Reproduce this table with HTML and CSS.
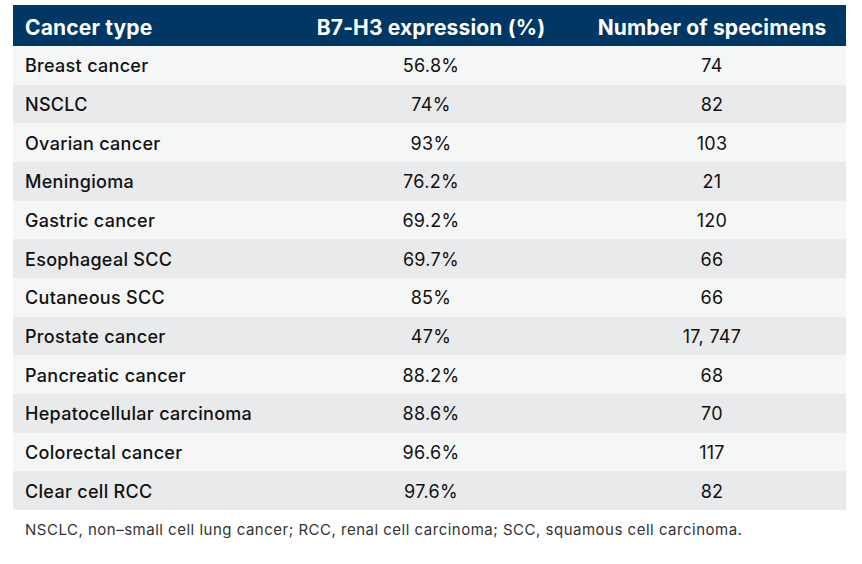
FILE: index.html
```html
<!DOCTYPE html>
<html>
<head>
<meta charset="utf-8">
<link rel="stylesheet" href="styles.css">
</head>
<body>
<div class="wrap">
<table class="data">
<colgroup><col class="c1"><col class="c2"><col class="c3"></colgroup>
<thead>
<tr><th class="lbl">Cancer type</th><th>B7-H3 expression (%)</th><th>Number of specimens</th></tr>
</thead>
<tbody>
<tr><td class="lbl">Breast cancer</td><td>56.8%</td><td>74</td></tr>
<tr><td class="lbl">NSCLC</td><td>74%</td><td>82</td></tr>
<tr><td class="lbl">Ovarian cancer</td><td>93%</td><td>103</td></tr>
<tr><td class="lbl">Meningioma</td><td>76.2%</td><td>21</td></tr>
<tr><td class="lbl">Gastric cancer</td><td>69.2%</td><td>120</td></tr>
<tr><td class="lbl">Esophageal SCC</td><td>69.7%</td><td>66</td></tr>
<tr><td class="lbl">Cutaneous SCC</td><td>85%</td><td>66</td></tr>
<tr><td class="lbl">Prostate cancer</td><td>47%</td><td>17, 747</td></tr>
<tr><td class="lbl">Pancreatic cancer</td><td>88.2%</td><td>68</td></tr>
<tr><td class="lbl">Hepatocellular carcinoma</td><td>88.6%</td><td>70</td></tr>
<tr><td class="lbl">Colorectal cancer</td><td>96.6%</td><td>117</td></tr>
<tr><td class="lbl">Clear cell RCC</td><td>97.6%</td><td>82</td></tr>
</tbody>
</table>
<p class="note">NSCLC, non–small cell lung cancer; RCC, renal cell carcinoma; SCC, squamous cell carcinoma.</p>
</div>
</body>
</html>
```
FILE: styles.css
```css
html, body { margin: 0; padding: 0; background: #ffffff; }
body { font-family: Inter, "Liberation Sans", sans-serif; color: #111; }
.wrap { padding: 5px 16px 0 13px; }
.data { width: 833px; border-collapse: collapse; table-layout: fixed; }
.c1 { width: 271px; }
.c2 { width: 294px; }
.c3 { width: 268px; }
.data th {
  background: #003764; color: #fff; font-weight: 700; font-size: 21px;
  height: 38px; padding: 3px 12px 0; text-align: center; letter-spacing: 0.15px;
}
.data td {
  height: 37.67px; padding: 1px 12px 0; text-align: center; font-size: 18px;
  font-weight: 400; letter-spacing: 0.3px; color: #111;
}
.data .lbl { text-align: left; }
.data td.lbl { font-weight: 500; }
.data tbody tr:nth-child(odd) td { background: #f5f6f6; }
.data tbody tr:nth-child(even) td { background: #e9eaeb; }
.note { margin: 10px 0 0 12px; font-size: 15px; color: #333; letter-spacing: 0.5px; }
```
